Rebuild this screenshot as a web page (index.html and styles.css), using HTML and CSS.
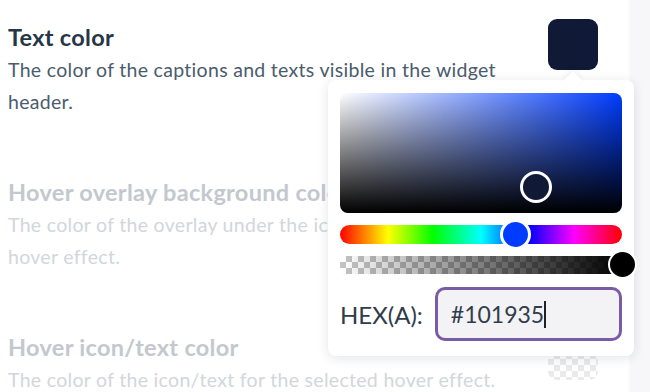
FILE: index.html
```html
<!DOCTYPE html>
<html lang="en">
<head>
    <meta charset="UTF-8">
    <meta name="viewport" content="width=device-width, initial-scale=1.0">
    <title>Widget header colors</title>
    <link rel="stylesheet" href="styles.css">
</head>
<body>

    <div class="settings">

        <div class="setting">
            <div class="info">
                <h2>Text color</h2>
                <p>The color of the captions and texts visible in the widget header.</p>
            </div>
            <div class="swatch-wrap">
                <div class="swatch"></div>

                <!-- Color picker opened from the swatch -->
                <div class="picker">
                    <div class="saturation">
                        <div class="sat-thumb"></div>
                    </div>
                    <div class="hue">
                        <div class="hue-thumb"></div>
                    </div>
                    <div class="alpha">
                        <div class="alpha-thumb"></div>
                    </div>
                    <div class="hex-row">
                        <label for="hex">HEX(A):</label>
                        <div class="hex-input">
                            <span id="hex">#101935</span><span class="caret"></span>
                        </div>
                    </div>
                </div>
            </div>
        </div>

        <div class="setting disabled">
            <div class="info">
                <h2>Hover overlay background color</h2>
                <p>The color of the overlay under the icon/text for the chosen hover effect.</p>
            </div>
            <div class="swatch-wrap">
                <div class="swatch checker"></div>
            </div>
        </div>

        <div class="setting disabled">
            <div class="info">
                <h2>Hover icon/text color</h2>
                <p>The color of the icon/text for the selected hover effect.</p>
            </div>
            <div class="swatch-wrap">
                <div class="swatch checker"></div>
            </div>
        </div>

    </div>

</body>
</html>
```

FILE: styles.css
```css
body {
    font-family: Lato, "Open Sans", Arial, sans-serif;
    background: linear-gradient(to right, #fff 627px, #f7f7f9 631px);
    margin: 0;
    padding: 0;
    overflow: hidden;
    height: 392px;
}

.settings {
    width: 590px;
    padding-left: 8px;
}

.setting {
    display: flex;
    justify-content: space-between;
    align-items: flex-start;
    padding-top: 19px;
    height: 136px;
}

.info {
    width: 520px;
    padding-top: 3px;
}

.info h2 {
    margin: 0;
    font-size: 23.5px;
    line-height: 30px;
    font-weight: 700;
    letter-spacing: 0.3px;
    color: #263646;
}

.info p {
    margin: 2px 0 0;
    font-size: 19.5px;
    line-height: 32px;
    letter-spacing: 0.3px;
    color: #4a5c6e;
}

.disabled .info h2 {
    color: #c3c8ce;
}

.disabled .info p {
    color: #d2d6db;
}

.disabled .swatch {
    opacity: 0.3;
}

.swatch-wrap {
    position: relative;
}

.swatch {
    width: 50px;
    height: 51px;
    border-radius: 9px;
    background-color: #101935;
}

.checker {
    background-color: #fff;
    background-image:
        linear-gradient(45deg, #bbb 25%, transparent 25%, transparent 75%, #bbb 75%),
        linear-gradient(45deg, #bbb 25%, transparent 25%, transparent 75%, #bbb 75%);
    background-size: 12px 12px;
    background-position: 0 0, 6px 6px;
}

/* Picker */
.picker {
    position: absolute;
    top: 61px;
    left: -220px;
    width: 282px;
    padding: 13px 12px 15px;
    background-color: #fff;
    border-radius: 8px;
    box-shadow: 0 2px 12px rgba(20, 30, 60, 0.12);
    z-index: 2;
}

.picker::before {
    content: "";
    position: absolute;
    top: -6px;
    left: 238px;
    width: 14px;
    height: 14px;
    background-color: #fff;
    transform: rotate(45deg);
    box-shadow: -2px -2px 5px rgba(20, 30, 60, 0.06);
}

.saturation {
    position: relative;
    height: 120px;
    border-radius: 8px;
    background:
        linear-gradient(to top, #000, rgba(0, 0, 0, 0)),
        linear-gradient(to right, #fff, rgba(255, 255, 255, 0)),
        #003cff;
}

.sat-thumb {
    position: absolute;
    left: 180px;
    top: 78px;
    width: 26px;
    height: 26px;
    border: 3px solid #fff;
    border-radius: 50%;
    background-color: #101935;
}

.hue {
    position: relative;
    height: 19px;
    margin-top: 12px;
    border-radius: 10px;
    background: linear-gradient(to right, #f00 0%, #ff0 17%, #0f0 33%, #0ff 50%, #00f 67%, #f0f 83%, #f00 100%);
}

.hue-thumb {
    position: absolute;
    left: 160px;
    top: -6px;
    width: 25px;
    height: 25px;
    border: 3px solid #fff;
    border-radius: 50%;
    background-color: #003cff;
}

.alpha {
    position: relative;
    height: 18px;
    margin-top: 12px;
    background-color: #fff;
    background-image:
        linear-gradient(to right, rgba(16, 25, 53, 0), #000),
        linear-gradient(45deg, #c4c4c4 25%, transparent 25%, transparent 75%, #c4c4c4 75%),
        linear-gradient(45deg, #c4c4c4 25%, transparent 25%, transparent 75%, #c4c4c4 75%);
    background-size: 100% 100%, 12px 12px, 12px 12px;
    background-position: 0 0, 0 0, 6px 6px;
}

.alpha-thumb {
    position: absolute;
    right: -15px;
    top: -6px;
    width: 25px;
    height: 25px;
    border: 2px solid #fff;
    border-radius: 50%;
    background-color: #000;
}

.hex-row {
    display: flex;
    align-items: center;
    gap: 12px;
    margin-top: 13px;
}

.hex-row label {
    font-size: 24px;
    color: #2f3d4a;
}

.hex-input {
    flex: 1;
    display: flex;
    align-items: center;
    height: 48px;
    padding-left: 13px;
    border: 3px solid #7a5ca6;
    border-radius: 10px;
    background-color: #f3f3f6;
    font-size: 23px;
    color: #2f3d4a;
}

.caret {
    display: inline-block;
    width: 2px;
    height: 27px;
    background-color: #222;
}
```
